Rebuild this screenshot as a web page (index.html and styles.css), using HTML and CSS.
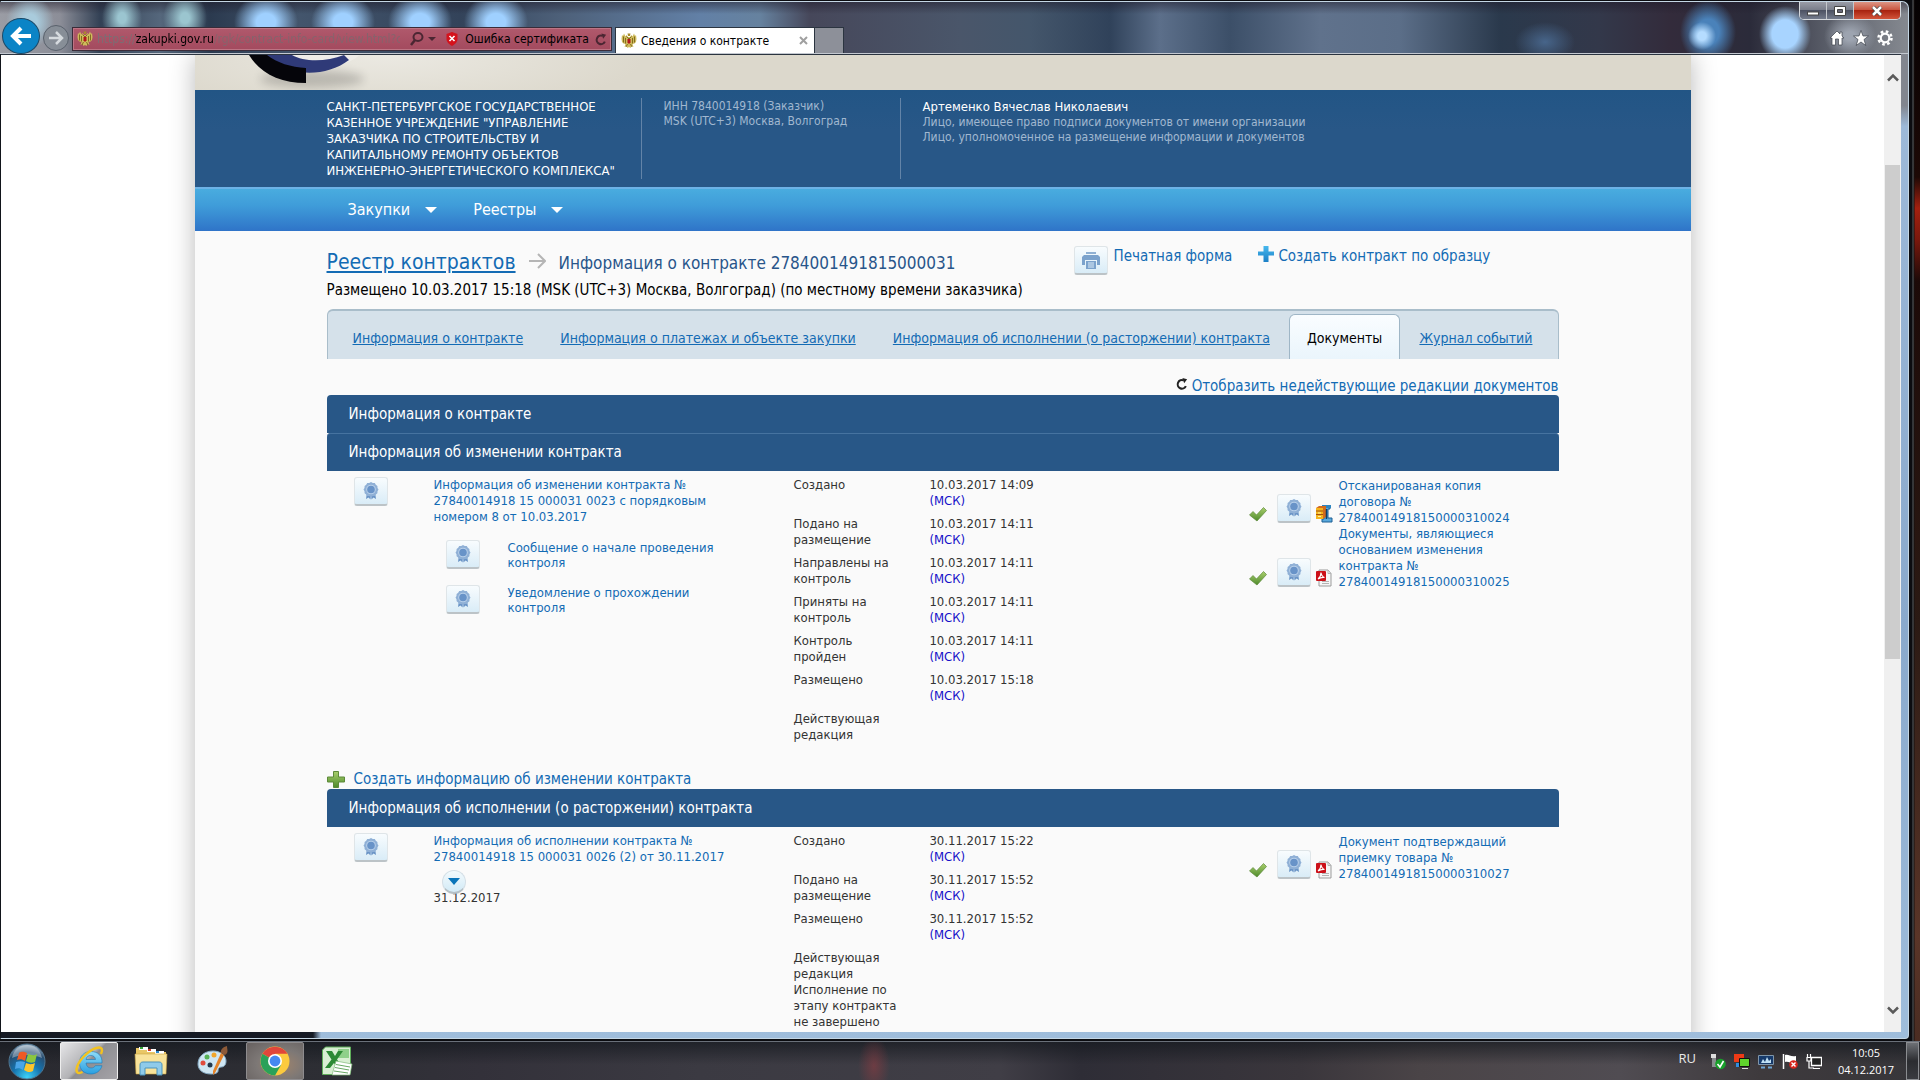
FILE: index.html
```html
<!DOCTYPE html>
<html lang="ru">
<head>
  <meta charset="UTF-8">
  <meta name="viewport" content="width=device-width, initial-scale=1">
  <title>Сведения о контракте</title>
  <link rel="stylesheet" href="styles.css">
</head>

<body>
  <svg class="sprite" width="0" height="0" aria-hidden="true">
    <defs>
      <linearGradient id="g-green" x1="0" y1="0" x2="0" y2="1">
        <stop offset="0" stop-color="#a9cf6c"/><stop offset="1" stop-color="#4e8a2c"/>
      </linearGradient>
      <linearGradient id="g-cyan" x1="0" y1="0" x2="0" y2="1">
        <stop offset="0" stop-color="#46b8ee"/><stop offset="1" stop-color="#1c7fc6"/>
      </linearGradient>
      <radialGradient id="g-orb" cx=".5" cy=".95" r=".9">
        <stop offset="0" stop-color="#3ed2f7"/><stop offset=".45" stop-color="#1573ae"/><stop offset=".8" stop-color="#284d70"/><stop offset="1" stop-color="#8ba3b8"/>
      </radialGradient>
      <linearGradient id="g-ie" x1="0" y1="0" x2="0" y2="1">
        <stop offset="0" stop-color="#8fdcf8"/><stop offset="1" stop-color="#2a9fe0"/>
      </linearGradient>
    </defs>
    <symbol id="medal" viewBox="0 0 16 18">
      <path d="M4 10L3 17l2.500-1.500L7.500 17.500 8 12l.5 5.500 2-2 2.500 1.500-1-7z" fill="#6a94c6"/>
      <path d="M8 0l1.800.9 2 .1 1 1.700 1.600 1.200.1 2L15.500 7.500l-1 1.700-.1 2-1.600 1.200-1 1.600-2 .1L8 15l-1.800-.9-2-.1-1-1.600-1.600-1.200-.1-2L.5 7.500l1-1.600.1-2 1.600-1.200 1-1.700 2-.1z" fill="#8fb0d6"/>
      <circle cx="8" cy="7.500" r="4.800" fill="#b9d0ea"/>
      <circle cx="8" cy="7.500" r="3.800" fill="#6893c8"/>
    </symbol>
    <symbol id="check" viewBox="0 0 18 15">
      <path d="M.5 8L4 4.500 7.500 8 14.500.5l3 3L8 14z" fill="url(#g-green)" stroke="#5d8a3a" stroke-width=".7"/>
    </symbol>
    <symbol id="pdf" viewBox="0 0 16 18">
      <path d="M3 1h9l3 3.500V17H3z" fill="#f6f6f6" stroke="#9b9b9b"/>
      <path d="M12 1v3.500h3M6 14.500h7M6 12.500h7" fill="none" stroke="#b4b4b4"/>
      <rect y="2" width="10" height="10" rx="1" fill="#cc1018"/>
      <path d="M2 10c2-1.500 3-4 3-6.500.5 3 1.500 4.500 3.500 5-2-.3-4.500.2-6.500 1.500z" fill="none" stroke="#fff" stroke-width="1.100"/>
    </symbol>
    <symbol id="zip" viewBox="0 0 18 18">
      <path d="M8 1h7v3h-2v9h4v4H7v-3h2z" fill="#5aa9dc" stroke="#1d5f94"/>
      <rect x="7" width="9" height="3" fill="#2e86c1"/>
      <path d="M1 3l3-2h7v11l-3 2H1z" fill="#d36a1c"/>
      <path d="M1 3h7v11H1z" fill="#f5b41b"/>
      <path d="M1 6h7M1 9.500h7" stroke="#a8500c"/>
      <path d="M3 8h3M3 11.500h3" stroke="#fff0a0"/>
      <path d="M11.500 4v10" stroke="#103e66" stroke-width="1.500"/>
    </symbol>
    <symbol id="eagle" viewBox="0 0 16 16">
      <path d="M7 4L5.500 2 4.500 3.500 3 .5 2 3 1 2 .5 6 1 9l1.500 1.500 2 .5-1 3 2-1L6.500 15 8 14l1.500 1 1-2 2 1-1-3 2-.5L15 9l.5-3-.5-4-1 1-1-2.500-1.500 3-1-1.500L9 4z" fill="#cfbb5c"/>
      <path d="M2.500 3.500v6M13.500 3.500v6M4.500 5v5.500M11.500 5v5.500M5.500 3.500L8 6l2.500-2.500M6.500 11L5 14M9.500 11l1.500 3" fill="none" stroke="#7a6418" stroke-width=".9"/>
      <path d="M6.500.5h3L9 3H7z" fill="#a88d2c"/>
      <path d="M6.500 6h3v3.500L8 11 6.500 9.500z" fill="#b3161c"/>
    </symbol>
    <symbol id="reload" viewBox="0 0 14 14">
      <path d="M11.500 9.500A5 5 0 1 1 9 2.800" fill="none" stroke="currentColor" stroke-width="2.400"/>
      <path d="M7.500 0L13 1.500 9.500 6z" fill="currentColor"/>
    </symbol>
  </svg>

  <div class="desktop">
    <div class="window">
      <header class="chrome">
        <button class="nav-back" aria-label="Назад">
          <svg width="24" height="20" viewBox="0 0 24 20"><path d="M12 2L4 10l8 8M4 10h18" fill="none" stroke="#fff" stroke-width="4"/></svg>
        </button>
        <button class="nav-forward" aria-label="Вперед">
          <svg width="16" height="14" viewBox="0 0 16 14"><path d="M8 1l6 6-6 6M14 7H1" fill="none" stroke="#d5dade" stroke-width="2.500"/></svg>
        </button>
        <div class="address">
          <svg width="16" height="16"><use href="#eagle"/></svg>
          <input class="address-url" type="text" aria-label="Адрес" value="https://zakupki.gov.ru/rgk/contract-info-card/view.html?o">
          <button class="plain" aria-label="Поиск">
            <svg width="26" height="16" viewBox="0 0 26 16"><ellipse cx="8" cy="6" rx="4.500" ry="4" fill="none" stroke="#4b2632" stroke-width="2"/><path d="M5 9l-4 5" stroke="#4b2632" stroke-width="2.500"/><path d="M18 6h8l-4 4z" fill="#4b2632"/></svg>
          </button>
          <svg class="shield" width="12" height="14" viewBox="0 0 12 14"><path d="M6 0l5.500 2v5c0 3.500-3 5.500-5.500 7C3.500 12.500.5 10.500.5 7V2z" fill="#d4121c"/><path d="M3.500 4l5 5M8.500 4l-5 5" stroke="#fff" stroke-width="1.600"/></svg>
          <span class="address-error">Ошибка сертификата</span>
          <button class="plain refresh" aria-label="Обновить"><svg width="12" height="13"><use href="#reload"/></svg></button>
        </div>
        <div class="tab">
          <svg width="16" height="16"><use href="#eagle"/></svg>
          <span>Сведения о контракте</span>
          <button class="plain" aria-label="Закрыть вкладку"><svg width="9" height="9" viewBox="0 0 9 9"><path d="M1 1l7 7M8 1L1 8" stroke="#a0a0a0" stroke-width="2"/></svg></button>
        </div>
        <button class="tab-new" aria-label="Новая вкладка"></button>
        <div class="chrome-right">
          <div class="win-buttons">
            <button aria-label="Свернуть"><svg width="12" height="10" viewBox="0 0 12 10"><rect x=".5" y="6" width="11" height="3" fill="#fff" stroke="#444"/></svg></button>
            <button aria-label="Развернуть"><svg width="12" height="10" viewBox="0 0 12 10"><path d="M.5.5h11v9H.5z" fill="#fff" stroke="#444"/><path d="M3.500 3.500h5v3h-5z" fill="#667" stroke="#444"/></svg></button>
            <button class="win-close" aria-label="Закрыть"><svg width="12" height="10" viewBox="0 0 12 10"><path d="M2 1l8 8M10 1L2 9" stroke="#444" stroke-width="4"/><path d="M2 1l8 8M10 1L2 9" stroke="#fff" stroke-width="2.500"/></svg></button>
          </div>
          <div class="chrome-tools">
            <button class="plain" aria-label="Домашняя страница"><svg width="16" height="16" viewBox="0 0 16 16"><path d="M8 1L1 8h2v7h3.500V9h3v6H13V8h2l-2-2V2h-2v2z" fill="#fff" stroke="#3d434c" stroke-width=".7"/></svg></button>
            <button class="plain" aria-label="Избранное"><svg width="16" height="16" viewBox="0 0 16 16"><path d="M8 .5l2 5.500h5.500L11 9.500l1.800 6L8 12l-4.800 3.500 1.800-6L.5 6H6z" fill="#fff" stroke="#3d434c" stroke-width=".7"/></svg></button>
            <button class="plain" aria-label="Сервис"><svg width="16" height="16" viewBox="0 0 16 16"><circle cx="8" cy="8" r="6.500" fill="none" stroke="#fff" stroke-width="2.500" stroke-dasharray="2.600 2.500"/><circle cx="8" cy="8" r="4.300" fill="none" stroke="#fff" stroke-width="2.200"/></svg></button>
          </div>
        </div>
      </header>

      <div class="viewport">
        <div class="scroller">
          <div class="page">
            <div class="banner">
              <svg width="130" height="35" viewBox="0 0 130 35">
                <ellipse cx="72" cy="24" rx="52" ry="9" fill="#000" opacity=".18" class="logo-shadow"/>
                <path d="M44 0h76c-6 5-14 8-22 10-20 4-36 3-54-10z" fill="#efede8"/>
                <path d="M20 0h32c12 7 34 7 52 0l5 5c-16 12-36 15-56 11C40 13 28 7 20 0z" fill="#2f3a78"/>
                <path d="M9 0h18c10 8 24 12 39 13v15C40 28 20 18 9 0z" fill="#05050a"/>
              </svg>
            </div>

            <div class="org">
              <div class="org-name">САНКТ-ПЕТЕРБУРГСКОЕ ГОСУДАРСТВЕННОЕ КАЗЕННОЕ УЧРЕЖДЕНИЕ "УПРАВЛЕНИЕ ЗАКАЗЧИКА ПО СТРОИТЕЛЬСТВУ И КАПИТАЛЬНОМУ РЕМОНТУ ОБЪЕКТОВ ИНЖЕНЕРНО-ЭНЕРГЕТИЧЕСКОГО КОМПЛЕКСА"</div>
              <div class="org-info">ИНН 7840014918 (Заказчик)<br>MSK (UTC+3) Москва, Волгоград</div>
              <div class="org-user">
                <div class="user-name">Артеменко Вячеслав Николаевич</div>
                Лицо, имеющее право подписи документов от имени организации<br>
                Лицо, уполномоченное на размещение информации и документов
              </div>
            </div>

            <nav class="menu">
              <a href="#">Закупки</a>
              <a href="#">Реестры</a>
            </nav>

            <main class="content">
              <div class="headline">
                <div class="crumbs">
                  <a href="#">Реестр контрактов</a>
                  <svg width="17" height="16" viewBox="0 0 17 16"><path d="M0 8h15M9 1l7 7-7 7" fill="none" stroke="#b5b5b5" stroke-width="2"/></svg>
                  <h1>Информация о контракте 2784001491815000031</h1>
                </div>
                <div class="actions">
                  <a class="print" href="#">
                    <span class="tile">
                      <svg width="18" height="17" viewBox="0 0 18 17"><path d="M4 0h10v2H4z" fill="#8fb0d3"/><path d="M2 3h14l2 2v8h-3V8H3v5H0V5z" fill="#7ba2cc"/><path d="M4 9h10v8H4z" fill="#7ba2cc"/><path d="M6 11h6M6 13h6M6 15h6" stroke="#dcebf7"/></svg>
                    </span>
                    Печатная форма
                  </a>
                  <a class="sample" href="#">
                    <svg width="16" height="16" viewBox="0 0 16 16"><path d="M5.500 0h5v5.500H16v4h-5.500V16h-5V9.500H0v-4h5.500z" fill="url(#g-cyan)"/></svg>
                    Создать контракт по образцу
                  </a>
                </div>
              </div>
              <p class="placed">Размещено 10.03.2017 15:18 (MSK (UTC+3) Москва, Волгоград) (по местному времени заказчика)</p>

              <nav class="tabs">
                <a href="#">Информация о контракте</a>
                <a href="#">Информация о платежах и объекте закупки</a>
                <a href="#">Информация об исполнении (о расторжении) контракта</a>
                <a href="#" class="active">Документы</a>
                <a href="#">Журнал событий</a>
              </nav>

              <div class="show-old">
                <svg width="12" height="14"><use href="#reload"/></svg>
                <a href="#">Отобразить недействующие редакции документов</a>
              </div>

              <h2>Информация о контракте</h2>
              <h2 class="joined">Информация об изменении контракта</h2>
              <section class="docs">
                <div class="sign"><button class="tile" aria-label="Подпись"><svg width="16" height="18"><use href="#medal"/></svg></button></div>
                <div class="doc-name">
                  <a href="#">Информация об изменении контракта № 27840014918 15 000031 0023 с порядковым номером 8 от 10.03.2017</a>
                  <div class="subdoc">
                    <button class="tile" aria-label="Подпись"><svg width="16" height="18"><use href="#medal"/></svg></button>
                    <a href="#">Сообщение о начале проведения контроля</a>
                  </div>
                  <div class="subdoc">
                    <button class="tile" aria-label="Подпись"><svg width="16" height="18"><use href="#medal"/></svg></button>
                    <a href="#">Уведомление о прохождении контроля</a>
                  </div>
                </div>
                <table class="history">
                  <tr><th>Создано</th><td>10.03.2017 14:09 <span>(МСК)</span></td></tr>
                  <tr><th>Подано на размещение</th><td>10.03.2017 14:11 <span>(МСК)</span></td></tr>
                  <tr><th>Направлены на контроль</th><td>10.03.2017 14:11 <span>(МСК)</span></td></tr>
                  <tr><th>Приняты на контроль</th><td>10.03.2017 14:11 <span>(МСК)</span></td></tr>
                  <tr><th>Контроль пройден</th><td>10.03.2017 14:11 <span>(МСК)</span></td></tr>
                  <tr><th>Размещено</th><td>10.03.2017 15:18 <span>(МСК)</span></td></tr>
                  <tr><th>Действующая редакция</th><td></td></tr>
                </table>
                <div class="files">
                  <div class="file">
                    <svg class="file-check" width="18" height="15"><use href="#check"/></svg>
                    <button class="tile" aria-label="Подпись"><svg width="16" height="18"><use href="#medal"/></svg></button>
                    <svg class="file-type" width="18" height="18"><use href="#zip"/></svg>
                    <a href="#">Отсканированая копия договора № 27840014918150000310024</a>
                  </div>
                  <div class="file">
                    <svg class="file-check" width="18" height="15"><use href="#check"/></svg>
                    <button class="tile" aria-label="Подпись"><svg width="16" height="18"><use href="#medal"/></svg></button>
                    <svg class="file-type" width="18" height="18"><use href="#pdf"/></svg>
                    <a href="#">Документы, являющиеся основанием изменения контракта № 27840014918150000310025</a>
                  </div>
                </div>
              </section>

              <div class="create">
                <svg width="18" height="17" viewBox="0 0 18 17"><path d="M6.500.5h5v5.500h6v5h-6v5.500h-5V11h-6V6h6z" fill="url(#g-green)" stroke="#5d8a3a"/></svg>
                <a href="#">Создать информацию об изменении контракта</a>
              </div>

              <h2>Информация об исполнении (о расторжении) контракта</h2>
              <section class="docs">
                <div class="sign"><button class="tile" aria-label="Подпись"><svg width="16" height="18"><use href="#medal"/></svg></button></div>
                <div class="doc-name">
                  <a href="#">Информация об исполнении контракта № 27840014918 15 000031 0026 (2) от 30.11.2017</a>
                  <button class="expand" aria-label="Развернуть"><svg width="12" height="7" viewBox="0 0 12 7"><path d="M0 0h12L6 7z" fill="#0a74b9"/></svg></button>
                  <div>31.12.2017</div>
                </div>
                <table class="history">
                  <tr><th>Создано</th><td>30.11.2017 15:22 <span>(МСК)</span></td></tr>
                  <tr><th>Подано на размещение</th><td>30.11.2017 15:52 <span>(МСК)</span></td></tr>
                  <tr><th>Размещено</th><td>30.11.2017 15:52 <span>(МСК)</span></td></tr>
                  <tr><th>Действующая редакция<br>Исполнение по этапу контракта не завершено</th><td></td></tr>
                </table>
                <div class="files">
                  <div class="file">
                    <svg class="file-check" width="18" height="15"><use href="#check"/></svg>
                    <button class="tile" aria-label="Подпись"><svg width="16" height="18"><use href="#medal"/></svg></button>
                    <svg class="file-type" width="18" height="18"><use href="#pdf"/></svg>
                    <a href="#">Документ подтверждащий приемку товара № 27840014918150000310027</a>
                  </div>
                </div>
              </section>
            </main>
          </div>
        </div>
        <div class="scrollbar">
          <button class="plain" aria-label="Вверх"><svg width="12" height="9" viewBox="0 0 12 9"><path d="M1 7.500l5-5 5 5" fill="none" stroke="#5a5a5a" stroke-width="2.500"/></svg></button>
          <div class="track"><div class="thumb"></div></div>
          <button class="plain" aria-label="Вниз"><svg width="12" height="9" viewBox="0 0 12 9"><path d="M1 1.500l5 5 5-5" fill="none" stroke="#5a5a5a" stroke-width="2.500"/></svg></button>
        </div>
      </div>
    </div>
  </div>

  <footer class="taskbar">
    <button class="task start" aria-label="Пуск">
      <svg width="38" height="37" viewBox="0 0 38 37">
        <ellipse cx="19" cy="18.500" rx="18" ry="17.500" fill="url(#g-orb)" stroke="#4f7590"/>
        <path d="M4 15C6 5 13 2 19 2s13 3 15 13c-8-4-22-4-30 0z" fill="#fff" opacity=".35"/>
        <path d="M11 10c3-2 5-1 8 0l-2 8c-3-2-5-2-8-1z" fill="#ee5a24"/>
        <path d="M20 11c3 1 6 2 9 0l-2 8c-3 1-6 1-9-1z" fill="#8cc63e"/>
        <path d="M8 19c3-1 6-1 9 0l-2 8c-3-2-5-2-8-1z" fill="#4aa5e8"/>
        <path d="M18 20c3 1 5 2 9 0l-2 8c-3 2-6 1-9-1z" fill="#fdc52c"/>
      </svg>
    </button>
    <button class="task task-active" aria-label="Internet Explorer">
      <svg width="32" height="32" viewBox="0 0 32 32">
        <path d="M29 18H13c.3 3.500 2.500 5 5 5 2 0 3.500-.8 4.300-2.300H29C27.500 26 23 29 18 29c-7 0-11.500-4.500-11.500-11S11 6.500 18 6.500 29.500 11 29 18zM13 14.500h9.500c-.3-2.500-2-4-4.700-4s-4.400 1.500-4.800 4z" fill="url(#g-ie)" stroke="#1a78bb" stroke-width=".6"/>
        <path d="M28 9c2-4 1-6.500-2-6.500C19 2.500 7 13 4 22c-1.500 5 .5 7.500 5.500 5" fill="none" stroke="#f3c21f" stroke-width="2.500"/>
      </svg>
    </button>
    <button class="task" aria-label="Проводник">
      <svg width="34" height="32" viewBox="0 0 34 32">
        <path d="M2 3h12v4h18v21H2z" fill="#e9c766"/>
        <path d="M5 2h9v3H5zM13 4h9v3h-9zM21 6h9v3h-9z" fill="#fff"/>
        <path d="M6 2h3v2H6z" fill="#3aa63a"/><path d="M14 4h3v2h-3z" fill="#d23b2a"/><path d="M22 6h3v2h-3z" fill="#2a86c8"/>
        <path d="M1 9h32l-1 20H2z" fill="#f8e39b" stroke="#c9a545" stroke-width=".6"/>
        <path d="M6 30V20c0-2 1-3 3-3h16c2 0 3 1 3 3v10h-5v-7H11v7z" fill="#8fcbea" stroke="#4b93bd"/>
      </svg>
    </button>
    <button class="task" aria-label="Paint">
      <svg width="34" height="32" viewBox="0 0 34 32">
        <path d="M2 19C2 11 9 6 17 6s13 5 13 10-3 6-5 6-3 2-3 4-3 3-7 3C7 29 2 25 2 19z" fill="#cfe6f3" stroke="#86abc4"/>
        <circle cx="7" cy="18" r="2.500" fill="#e04b3d"/><circle cx="11" cy="12" r="2.500" fill="#56b257"/><circle cx="18" cy="10" r="2.500" fill="#f1a62c"/><circle cx="14" cy="20" r="2.500" fill="#23384c"/>
        <path d="M17 30l2-2 9-18-3-2-8 18z" fill="#e48329"/>
        <path d="M25 8c-1-3 2-6 6-7 0 4 2 6-2 9z" fill="#8d5a38"/>
      </svg>
    </button>
    <button class="task task-open" aria-label="Chrome">
      <svg width="30" height="30" viewBox="0 0 30 30">
        <circle cx="15" cy="15" r="14.500" fill="#fcca3e"/>
        <path d="M15 15L2.500 7.800A14.500 14.500 0 0 1 27.500 7.800H15z" fill="#e0463b"/>
        <path d="M2.500 7.800A14.500 14.500 0 0 0 15 29.500L21 19l-6-4z" fill="#2ba159"/>
        <circle cx="15" cy="15" r="7" fill="#fff"/><circle cx="15" cy="15" r="5.400" fill="#4688f1"/>
      </svg>
    </button>
    <button class="task" aria-label="Excel">
      <svg width="32" height="30" viewBox="0 0 32 30">
        <path d="M1.500 4l3-3h25v26l-3 1.500h-25z" fill="#d9efd3" stroke="#5fae5a"/>
        <path d="M17 3h11v9H17z" fill="#8fd08a"/>
        <path d="M5 5h6l3 5 3-5h5l-6 8.500L22 22h-6l-3-5-4 5H4l6.500-8.500z" fill="#2d8a35"/>
        <path d="M15 15l16 3-2 11H11z" fill="#fff" stroke="#7fb97a" stroke-width=".7"/>
        <path d="M15 18.500l14 2.500M14 21.500l14 2.500M13 25l14 2" stroke="#6aa866"/>
      </svg>
    </button>
    <div class="tray">
      <span class="lang">RU</span>
      <svg width="16" height="17" viewBox="0 0 16 17"><path d="M1 1h5v4H1z" fill="#ddd"/><path d="M2 5h4v9H2z" fill="#8a8d90"/><circle cx="10.500" cy="11" r="5.300" fill="#18a12b"/><path d="M7.500 11l2.500 3 3.500-6" fill="none" stroke="#fff" stroke-width="1.600"/></svg>
      <svg width="16" height="17" viewBox="0 0 16 17"><path d="M0 1h10v8H0z" fill="#ee3a16"/><path d="M2 10h3v4H2z" fill="#2f8fe0"/><path d="M5.500 5.500h10v8h-10z" fill="#5fd32c" stroke="#111"/><path d="M8 15.500h6" stroke="#ddd"/></svg>
      <svg width="16" height="17" viewBox="0 0 16 17"><path d="M.5 2.500h15v9H.5z" fill="#163a6b" stroke="#7f95a9"/><path d="M3 10l2-4 2 3 2-5 2 4 2-2v4z" fill="#bfe0f5"/><path d="M3 14.500h4M10 14.500h4" stroke="#6fa6d6" stroke-width="2"/></svg>
      <svg width="16" height="17" viewBox="0 0 16 17"><path d="M1.500 1v15" stroke="#fff" stroke-width="1.500"/><path d="M3 2c4-1 5 2 11 1v7c-5 1-7-2-11-1z" fill="#fff"/><circle cx="11.500" cy="11.500" r="4.300" fill="#d8241c"/><path d="M9.500 9.500l4 4M13.500 9.500l-4 4" stroke="#fff" stroke-width="1.400"/></svg>
      <svg width="16" height="17" viewBox="0 0 16 17"><path d="M5.500 4.500h10v8h-10z" fill="#222" stroke="#fff" stroke-width="1.300"/><path d="M7 15.500h7M3 8v7h5M1.500 1v3M4.500 1v3M1 4.500h4V8H1z" fill="none" stroke="#fff" stroke-width="1.200"/></svg>
    </div>
    <time class="clock">10:05<br>04.12.2017</time>
    <button class="show-desktop" aria-label="Свернуть все окна"></button>
  </footer>
</body>

</html>
```
FILE: styles.css
```css
* {
  box-sizing: border-box;
}
body {
  display: flex;
  flex-direction: column;
  height: 100vh;
  margin: 0;
  overflow: hidden;
  background: #0b0d12;
  color: #333;
  font: 13px/16px "DejaVu Sans Condensed", "DejaVu Sans", sans-serif;
}
button {
  padding: 0;
  border: 0;
  background: none;
  font: inherit;
}
a {
  color: #136bb4;
  text-decoration: none;
}
svg {
  display: block;
  flex: none;
}
.sprite {
  position: absolute;
}
.plain {
  display: flex;
  align-items: center;
  justify-content: center;
}

/* desktop and window frame */
.desktop {
  flex: 1;
  min-height: 0;
  padding: 1px 11px 2px 0;
  background: linear-gradient(90deg, #0b0c10 calc(100% - 8px), #5a5d60 calc(100% - 7px), #14100f calc(100% - 6px), transparent calc(100% - 5px)),
    linear-gradient(#050203, #1d0906 17%, #a3200f 20%, #7a180d 23%, #1c0a08 27%, #2b1a14 60%, #5a3528 90%, #4a2c22);
}
.window {
  display: flex;
  flex-direction: column;
  height: 100%;
  padding: 0 7px 6px 0;
  border: 1px solid #c4d6e4;
  border-left-color: #11141a;
  border-radius: 0 7px 4px 0;
  background: linear-gradient(90deg, #151a24 312px, transparent 320px) 0 100% / 100% 6px no-repeat,
    linear-gradient(#82868f 10%, #9db9d8 12%, #8aa9cc 60%, #9fbddb);
}

/* browser chrome */
.chrome {
  display: flex;
  align-items: flex-start;
  height: 52px;
  margin: 0 -7px 0 -1px;
  padding-left: 2px;
  border-bottom: 1px solid #c3c8d0;
  border-radius: 0 7px 0 0;
  font-size: 12px;
  background:
    radial-gradient(ellipse 24px 26px at 30px 20px, #a9cbdc 30%, transparent),
    radial-gradient(ellipse 20px 26px at 122px 16px, #9bc5d0 20%, transparent),
    radial-gradient(ellipse 22px 26px at 185px 16px, #9bc5cf 20%, transparent),
    radial-gradient(ellipse 32px 28px at 266px 20px, #9fd0ff 30%, transparent),
    radial-gradient(ellipse 32px 28px at 343px 20px, #9fd0ff 30%, transparent),
    radial-gradient(ellipse 32px 28px at 420px 20px, #9fd0ff 30%, transparent),
    radial-gradient(ellipse 32px 28px at 496px 20px, #9fd0ff 30%, transparent),
    radial-gradient(ellipse 14px 14px at 1702px 34px, #b5dcff 30%, transparent),
    radial-gradient(ellipse 28px 32px at 1708px 30px, #4a82ba 40%, transparent),
    radial-gradient(ellipse 26px 28px at 1785px 32px, #a8d4ff 50%, transparent),
    radial-gradient(ellipse 26px 22px at 1850px 34px, #9da4b0 20%, transparent),
    radial-gradient(ellipse 30px 20px at 1545px 40px, #47658a, transparent),
    linear-gradient(rgba(30, 25, 40, .5), transparent 12px),
    linear-gradient(90deg, #9a9ca4, #8c8e98 60px, #334155 100px, #55677c 160px, #2b3a4f 210px, #43556c 300px, #33435a 460px, #4d6079 560px, #6280a6 700px, #66829f 760px, #46475a 810px, #4a566a 960px, #44566b 1030px, #30425a 1110px, #5c6f8a 1160px, #3c4f68 1230px, #60728c 1320px, #5b6e88 1400px, #2a394c 1500px, #33384a 1600px, #332b3b 1670px, #2b2b3a 1750px, #5b5f6a 1830px, #858990);
}
.nav-back,
.nav-forward {
  display: flex;
  align-items: center;
  justify-content: center;
  border-radius: 50%;
}
.nav-back {
  width: 38px;
  height: 36px;
  margin-top: 16px;
  background: #0b84c6;
  border: 1px solid #1c4a68;
}
.nav-forward {
  width: 26px;
  height: 26px;
  margin: 23px 3px 0;
  border: 1px solid #59616c;
  background: #878e97;
}
.address {
  display: flex;
  align-items: center;
  width: 540px;
  height: 24px;
  margin-top: 25px;
  padding: 0 4px;
  border: 1px solid #3a2b38;
  box-shadow: inset 0 0 0 1px #bd7484;
  background: linear-gradient(#b0596c, #a34a5e);
  color: #000;
}
/* host name is dark, the rest of the url is dimmed */
.address-url {
  flex: 1;
  min-width: 0;
  margin: 0 10px 0 4px;
  padding: 0;
  border: 0;
  font: 12px/20px "DejaVu Sans Condensed", "DejaVu Sans", sans-serif;
  color: transparent;
  background: linear-gradient(90deg, #7c6d73 38px, #000 38px, #000 116px, #85636c 116px);
  -webkit-background-clip: text;
  background-clip: text;
}
.shield {
  margin: 0 7px 0 10px;
}
.address-error {
  margin-right: 6px;
  white-space: nowrap;
}
.refresh {
  color: #4b2632;
}
.tab {
  display: flex;
  align-items: center;
  width: 200px;
  height: 26px;
  margin: 25px 0 0 3px;
  padding: 0 6px 0 5px;
  border: 1px solid #2b3440;
  border-width: 1px 1px 0;
  background: #fff;
  color: #000;
}
.tab span {
  flex: 1;
  margin-left: 4px;
  white-space: nowrap;
}
.tab-new {
  width: 29px;
  height: 26px;
  margin-top: 25px;
  border: 1px solid #2b3440;
  border-width: 1px 1px 0 0;
  background: #8d9099;
}
.chrome-right {
  display: flex;
  flex-direction: column;
  align-items: flex-end;
  gap: 10px;
  margin-left: auto;
  padding-right: 7px;
}
.win-buttons {
  display: flex;
  height: 18px;
  border: 1px solid #d5d8dc;
  border-top: 0;
  border-radius: 0 0 5px 5px;
  overflow: hidden;
}
.win-buttons button {
  display: flex;
  align-items: center;
  justify-content: center;
  width: 27px;
  border-right: 1px solid #c5c8cd;
  background: linear-gradient(#9a9ca6, #777b88 50%, #4d5263 50%, #747b8c);
}
.win-buttons .win-close {
  width: 46px;
  border: 0;
  background: linear-gradient(#dd9584, #c8503a 50%, #a82310 50%, #d2543a);
}
.chrome-tools {
  display: flex;
  gap: 8px;
  padding-right: 8px;
}

/* page viewport */
.viewport {
  display: flex;
  flex: 1;
  min-height: 0;
  border-top: 1px solid #2b3440;
  background: #fff;
}
.scroller {
  flex: 1;
  overflow: hidden;
}
.scrollbar {
  display: flex;
  flex-direction: column;
  width: 17px;
  background: #f0f0f0;
}
.scrollbar button {
  height: 44px;
}
.track {
  flex: 1;
  padding: 66px 1px 0;
}
.thumb {
  height: 60%;
  background: #cdcdcd;
}
.page {
  max-width: 1496px;
  min-height: 100%;
  margin: 0 auto;
  background: #fafafa;
  box-shadow: 0 0 24px rgba(0, 0, 0, .28);
}
.banner {
  height: 35px;
  padding-left: 45px;
  background: radial-gradient(ellipse 260px 60px at 190px 0, #ebe9e2, #dcd8cc);
}
.logo-shadow {
  filter: blur(5px);
}
.org {
  display: grid;
  grid-template-columns: 315px 259px 1fr;
  padding: 8px 132px;
  background: linear-gradient(#225585, #285787 40px);
  color: #a1b8d0;
  font-size: 12px;
  line-height: 15px;
}
.org-name,
.org-info,
.org-user {
  padding-top: 1px;
}
.org-name,
.org-info {
  border-right: 1px solid #6384a8;
}
.org-name {
  padding-right: 14px;
  color: #fff;
  font-size: 13px;
  line-height: 16px;
}
.org-info,
.org-user {
  padding-left: 22px;
}
.user-name {
  color: #fff;
  font-size: 13px;
  line-height: 16px;
}
.menu {
  display: flex;
  gap: 36px;
  height: 44px;
  padding: 0 153px;
  border-top: 2px solid #6db2e6;
  background: linear-gradient(#49acdf, #3f9cd9 40%, #2f74c8);
}
.menu a {
  display: flex;
  align-items: center;
  color: #fff;
  font-size: 16px;
}
.menu a::after {
  content: "";
  margin-left: 15px;
  border: 6px solid transparent;
  border-top-color: #fff;
  border-bottom: 0;
}

/* contract card */
.content {
  padding: 15px 132px 0;
}
.headline {
  display: grid;
  grid-template-columns: 747fr 485fr;
}
.crumbs {
  display: flex;
  align-items: baseline;
  line-height: 32px;
  white-space: nowrap;
}
.crumbs a {
  font-size: 21px;
  text-decoration: underline;
}
.crumbs svg {
  margin: 0 13px;
}
h1 {
  margin: 0;
  color: #28558a;
  font-size: 17px;
  font-weight: normal;
}
.actions {
  display: flex;
  gap: 26px;
  font-size: 15px;
  line-height: 20px;
  white-space: nowrap;
}
.print,
.sample {
  display: flex;
  align-items: flex-start;
  gap: 6px;
}
.sample {
  gap: 4px;
}
.tile {
  display: flex;
  align-items: center;
  justify-content: center;
  flex: none;
  width: 34px;
  height: 29px;
  border: 1px solid #dfe5e8;
  border-bottom: 2px solid #bcc3c7;
  border-radius: 3px;
  background: linear-gradient(#f8fcfe, #d9ecf7);
}
.placed {
  margin: 1px 0 9px;
  color: #000;
  font-size: 15px;
  line-height: 20px;
}
.tabs {
  display: flex;
  justify-content: space-between;
  height: 50px;
  padding: 3px 7px 0;
  border: 1px solid #a9bdca;
  border-width: 2px 1px 0;
  border-radius: 6px 6px 0 0;
  background: #d5e1ea;
  font-size: 14px;
  white-space: nowrap;
}
.tabs a {
  padding: 15px 17px 0;
  border: 1px solid transparent;
  border-bottom: 0;
  text-decoration: underline;
}
.tabs .active {
  border-color: #9fb6c6;
  border-radius: 6px 6px 0 0;
  background: linear-gradient(#fafdff, #eaf5fc);
  color: #000;
  text-decoration: none;
}
.show-old {
  display: flex;
  justify-content: flex-end;
  gap: 4px;
  margin-top: 18px;
  color: #222;
  font-size: 15px;
  line-height: 18px;
}
h2 {
  margin: 0;
  padding: 1px 22px 0;
  border-radius: 4px 4px 0 0;
  background: #285787;
  color: #fff;
  font-size: 15px;
  font-weight: normal;
  line-height: 37px;
}
.joined {
  box-shadow: inset 0 1px #4673a0;
}
.docs {
  display: grid;
  grid-template-columns: 107fr 360fr 453fr 312fr;
  padding: 6px 0 26px;
}
.sign {
  padding-left: 27px;
}
.doc-name {
  padding-right: 60px;
}
.subdoc {
  display: flex;
  gap: 28px;
  padding-left: 12px;
  margin-top: 15px;
  line-height: 15px;
}
.expand {
  position: relative;
  display: flex;
  align-items: center;
  justify-content: center;
  width: 24px;
  height: 24px;
  margin: 5px 0 -4px 8px;
  border: 1px solid #d4dfe6;
  border-bottom: 2px solid #b5c0c6;
  border-radius: 50%;
  background: linear-gradient(#f3fafd, #d2eaf6);
}
.history {
  align-self: start;
  border-collapse: collapse;
}
.history th,
.history td {
  padding: 0 0 7px;
  font-weight: normal;
  text-align: left;
  vertical-align: top;
}
.history th {
  width: 30%;
  padding-right: 30px;
}
.history tr:last-child > * {
  padding-bottom: 0;
}
.history span {
  display: block;
  color: #1410c8;
}
.files {
  padding: 1px 30px 0 2px;
}
.file {
  display: flex;
  align-items: flex-end;
}
.file .tile {
  margin: 0 4px 3px 10px;
}
.file-check {
  margin-bottom: 4px;
}
.file-type {
  margin: 0 6px 3px 0;
}
.create {
  display: flex;
  align-items: center;
  gap: 9px;
  font-size: 15px;
  line-height: 20px;
}

/* taskbar */
.taskbar {
  display: flex;
  height: 39px;
  padding-left: 4px;
  border-top: 1px solid #6a7079;
  background:
    radial-gradient(ellipse 16px 30px at 874px 24px, rgba(140, 60, 66, .6), transparent),
    linear-gradient(rgba(20, 24, 30, .7), transparent 60%),
    linear-gradient(90deg, #2a2a30, #2d2e34 340px, #33313a 480px, #3b3a42 700px, #403e46 1000px, #2e2d36 1080px, #3a363c 1300px, #4a4447 1420px, #504c52 1620px, #3e3a3d 1760px, #37363a);
}
.task {
  display: flex;
  align-items: center;
  justify-content: center;
  width: 58px;
  margin-right: 4px;
  border-radius: 2px;
}
.start {
  width: 46px;
  margin-right: 10px;
}
.task-active {
  border: 1px solid #eee;
  background: linear-gradient(135deg, #e6e6e8, #b2b2b5 45%, #8e8e92 50%, #a5a3a8);
}
.task-open {
  border: 1px solid #8e8c8e;
  background: radial-gradient(ellipse at 60% 60%, #a0846c, #7d7876 50%, #66605f);
}
.tray {
  display: flex;
  align-items: center;
  gap: 8px;
  margin-left: auto;
  padding-top: 1px;
}
.lang {
  margin: 0 6px 7px 0;
  color: #e8e8e8;
  font: 13px/16px "Open Sans", sans-serif;
}
.clock {
  width: 80px;
  margin-left: 4px;
  padding-top: 2px;
  color: #fff;
  font: 11px/17px "Open Sans", sans-serif;
  text-align: center;
}
.show-desktop {
  width: 13px;
  margin-right: 1px;
  border: 1px solid #8b8d91;
  background: linear-gradient(#6d7075, #2b2c30 50%, #3a3b40);
}
```
